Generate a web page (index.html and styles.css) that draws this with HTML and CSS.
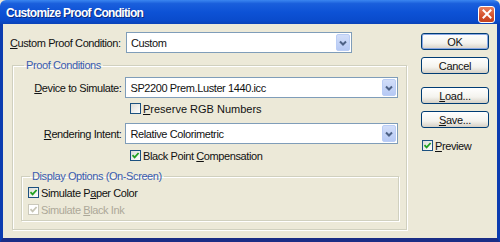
FILE: index.html
```html
<!DOCTYPE html>
<html lang="en">
<head>
    <meta charset="UTF-8">
    <title>Customize Proof Condition</title>
    <link rel="stylesheet" href="styles.css">
</head>
<body>
    <div class="window">
        <!-- Заголовок окна -->
        <div class="titlebar">
            <span class="title">Customize Proof Condition</span>
            <span class="close">
                <svg width="10" height="10" viewBox="0 0 10 10"><path d="M1.5 1.5 L8.5 8.5 M8.5 1.5 L1.5 8.5" stroke="#fff" stroke-width="2" stroke-linecap="square"/></svg>
            </span>
        </div>

        <div class="client">
            <div class="main">
                <div class="row">
                    <label class="lbl lbl-top"><u>C</u>ustom Proof Condition:</label>
                    <div class="select select-short">
                        <span class="value">Custom</span>
                        <span class="arrow"><svg width="8" height="6" viewBox="0 0 8 6"><path d="M1 1.5 L4 4.5 L7 1.5" fill="none" stroke="#4d6185" stroke-width="2"/></svg></span>
                    </div>
                </div>

                <fieldset class="group outer">
                    <legend>Proof Conditions</legend>

                    <div class="row">
                        <label class="lbl lbl-in"><u>D</u>evice to Simulate:</label>
                        <div class="select select-long">
                            <span class="value">SP2200 Prem.Luster 1440.icc</span>
                            <span class="arrow"><svg width="8" height="6" viewBox="0 0 8 6"><path d="M1 1.5 L4 4.5 L7 1.5" fill="none" stroke="#4d6185" stroke-width="2"/></svg></span>
                        </div>
                    </div>
                    <div class="check-row indent gap-a">
                        <span class="box"></span>
                        <span class="wide"><u>P</u>reserve RGB Numbers</span>
                    </div>

                    <div class="row gap-b">
                        <label class="lbl lbl-in"><u>R</u>endering Intent:</label>
                        <div class="select select-long">
                            <span class="value">Relative Colorimetric</span>
                            <span class="arrow"><svg width="8" height="6" viewBox="0 0 8 6"><path d="M1 1.5 L4 4.5 L7 1.5" fill="none" stroke="#4d6185" stroke-width="2"/></svg></span>
                        </div>
                    </div>
                    <div class="check-row indent gap-c">
                        <span class="box checked"><svg width="9" height="9" viewBox="0 0 9 9"><path d="M1.5 4.2 L3.6 6.4 L7.6 2" fill="none" stroke="#21a121" stroke-width="1.8"/></svg></span>
                        <span>Black Point <u>C</u>ompensation</span>
                    </div>

                    <fieldset class="group inner">
                        <legend>Display Options (On-Screen)</legend>
                        <div class="check-row">
                            <span class="box checked"><svg width="9" height="9" viewBox="0 0 9 9"><path d="M1.5 4.2 L3.6 6.4 L7.6 2" fill="none" stroke="#21a121" stroke-width="1.8"/></svg></span>
                            <span>Simulate P<u>a</u>per Color</span>
                        </div>
                        <div class="check-row disabled gap-a">
                            <span class="box checked"><svg width="9" height="9" viewBox="0 0 9 9"><path d="M1.5 4.2 L3.6 6.4 L7.6 2" fill="none" stroke="#c7c5b6" stroke-width="1.8"/></svg></span>
                            <span>Simulate <u>B</u>lack Ink</span>
                        </div>
                    </fieldset>
                </fieldset>
            </div>

            <!-- Кнопки справа -->
            <div class="side">
                <button class="btn default">OK</button>
                <button class="btn btn-cancel">Cancel</button>
                <button class="btn btn-load"><u>L</u>oad...</button>
                <button class="btn btn-save"><u>S</u>ave...</button>
                <div class="check-row preview">
                    <span class="box checked"><svg width="9" height="9" viewBox="0 0 9 9"><path d="M1.5 4.2 L3.6 6.4 L7.6 2" fill="none" stroke="#21a121" stroke-width="1.8"/></svg></span>
                    <span><u>P</u>review</span>
                </div>
            </div>
        </div>
    </div>
</body>
</html>
```

FILE: styles.css
```css
body {
    margin: 0;
    font-family: "Liberation Sans", Arial, sans-serif;
    font-size: 11px;
    letter-spacing: -0.4px;
    color: #111;
    background: #ece9d8;
}

.window {
    width: 500px;
    height: 242px;
    display: flex;
    flex-direction: column;
}

/* Синяя полоса заголовка */
.titlebar {
    height: 24px;
    display: flex;
    align-items: center;
    justify-content: space-between;
    padding: 0 5px 0 6px;
    background: linear-gradient(to bottom, #3b86f0 0%, #1a5fdc 15%, #0d52d6 50%, #0a4bcc 85%, #0a43b8 100%);
    border-radius: 6px 6px 0 0;
}

.title {
    color: #fff;
    font-weight: bold;
    font-size: 12px;
    letter-spacing: -0.7px;
    text-shadow: 1px 1px 0 #0a2a80;
    margin-top: 2px;
}

.close {
    width: 15px;
    height: 15px;
    display: flex;
    align-items: center;
    justify-content: center;
    border: 1px solid #fff;
    border-radius: 3px;
    background: linear-gradient(to bottom, #e9805c, #d4502c 60%, #c2401e);
    margin-top: 4px;
}

.client {
    flex: 1;
    display: flex;
    background: #ece9d8;
    border-left: 3px solid #0b3cb0;
    border-right: 3px solid #0b3cb0;
    border-bottom: 4px solid #1a2d86;
}

.main {
    margin-left: 7px;
    padding-top: 8px;
    width: 396px;
}

.row {
    display: flex;
    align-items: center;
    height: 21px;
}

.lbl {
    margin-right: 4px;
    white-space: nowrap;
}

.lbl-top {
    width: 112px;
}

.lbl-in {
    width: 101px;
    text-align: right;
}

/* Выпадающий список в стиле XP */
.select {
    height: 21px;
    box-sizing: border-box;
    border: 1px solid #7f9db9;
    background: #fff;
    display: flex;
    align-items: center;
    justify-content: space-between;
    padding: 0 1px 0 4px;
}

.select-short {
    width: 226px;
}

.select-long {
    width: 274px;
}

.arrow {
    width: 14px;
    height: 17px;
    box-sizing: border-box;
    border: 1px solid #bacdf5;
    border-radius: 2px;
    background: linear-gradient(to bottom, #d2def9, #b6c9f4);
    display: flex;
    align-items: center;
    justify-content: center;
}

/* Рамки групп */
.group {
    margin: 0;
    border: 1px solid #d0d0bf;
    box-shadow: 1px 1px 0 #fff, inset 1px 1px 0 #fff;
    min-width: 0;
}

.group legend {
    color: #3a5cb0;
    padding: 0 2px;
    line-height: 14px;
}

.outer {
    margin-top: 5px;
    margin-left: 2px;
    width: 395px;
    box-sizing: border-box;
    padding: 5px 8px 8px 8px;
}

.outer > legend {
    margin-left: 3px;
}

.inner {
    margin-top: 7px;
    width: 378px;
    box-sizing: border-box;
    padding: 3px 6px 4px 6px;
}

.inner > legend {
    margin-left: 2px;
}

.check-row {
    display: flex;
    align-items: center;
    height: 13px;
    white-space: nowrap;
}

.wide {
    letter-spacing: 0;
}

.indent {
    margin-left: 109px;
}

.gap-a {
    margin-top: 4px;
}

.gap-b {
    margin-top: 8px;
}

.gap-c {
    margin-top: 5px;
}

.box {
    width: 11px;
    height: 11px;
    box-sizing: border-box;
    border: 1px solid #1c5180;
    background: linear-gradient(135deg, #dcdcd7, #fff);
    margin-right: 2px;
    display: flex;
    align-items: center;
    justify-content: center;
}

.disabled {
    color: #aca899;
}

.disabled .box {
    border-color: #cac8bb;
    background: #fff;
}

/* Правая колонка с кнопками */
.side {
    margin-left: 15px;
    padding-top: 9px;
    display: flex;
    flex-direction: column;
    width: 68px;
}

.btn {
    height: 17px;
    width: 68px;
    padding: 0;
    font-family: inherit;
    font-size: 11px;
    letter-spacing: -0.3px;
    color: #111;
    border: 1px solid #003c74;
    border-radius: 3px;
    background: linear-gradient(to bottom, #fff 0%, #f4f3ee 60%, #d6d0c5 100%);
}

.btn.default {
    box-shadow: inset 0 0 0 1px #8ba8e4;
}

.btn-cancel {
    margin-top: 7px;
}

.btn-load {
    margin-top: 13px;
}

.btn-save {
    margin-top: 7px;
}

.preview {
    margin-top: 11px;
    margin-left: 1px;
}
```
